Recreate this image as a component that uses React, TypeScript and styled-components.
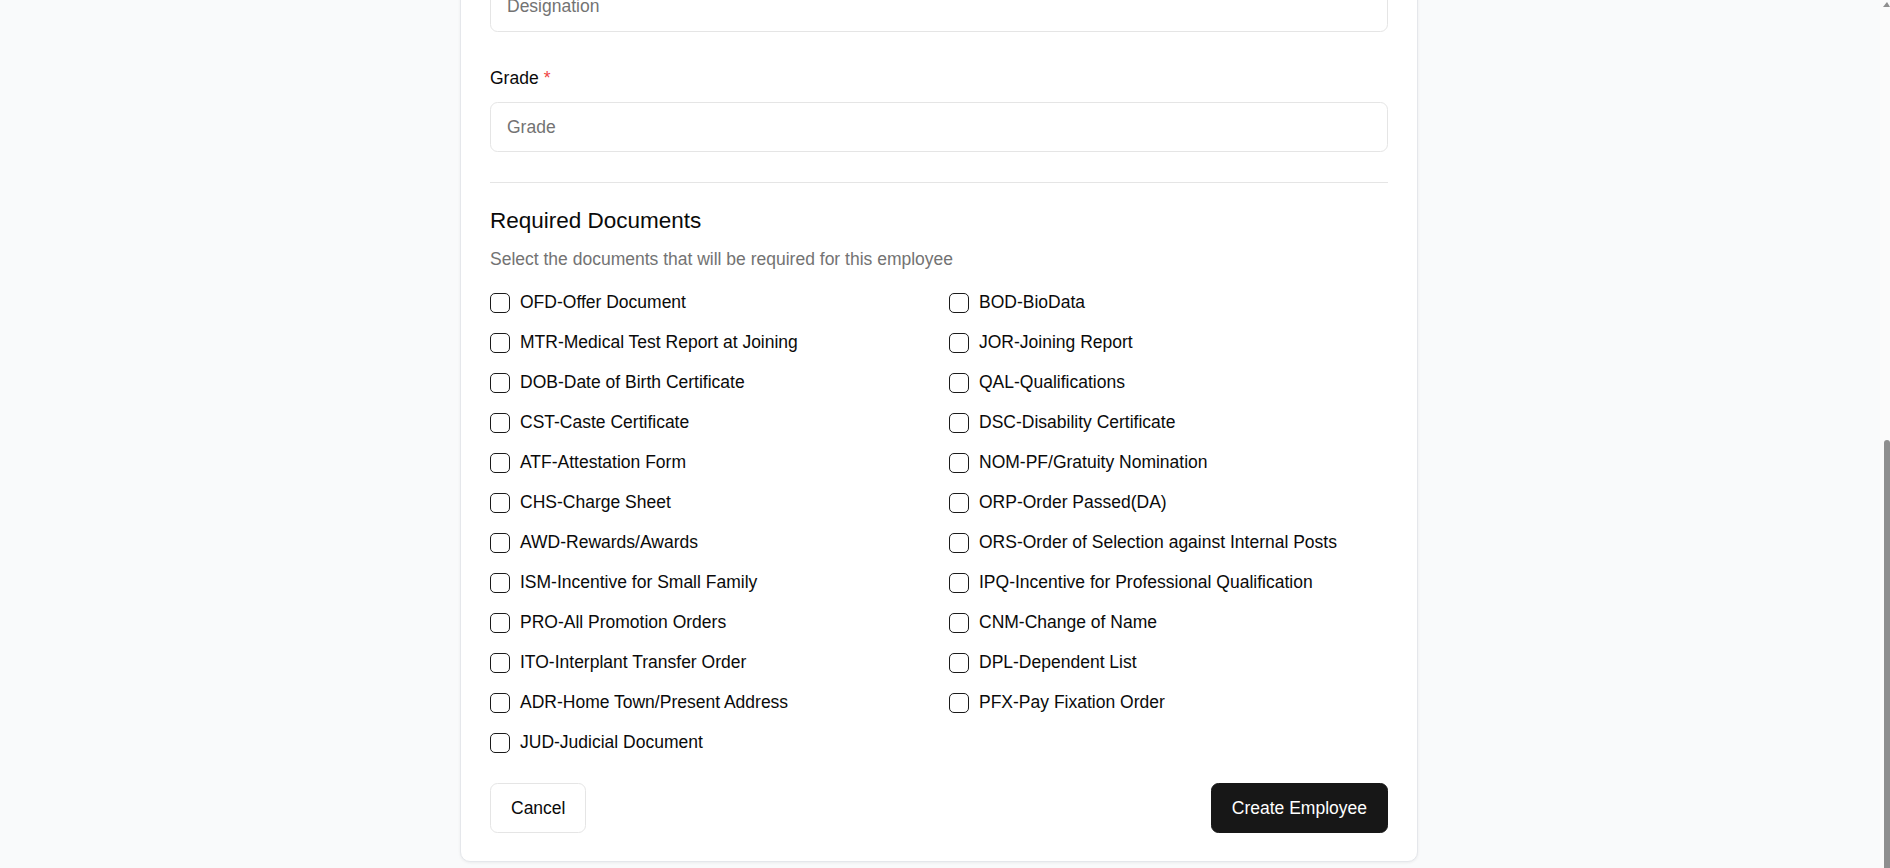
import React, { useLayoutEffect, useRef } from 'react'
import styled, { createGlobalStyle } from 'styled-components'

const GlobalStyle = createGlobalStyle`
  html,
  body {
    height: 100%;
    margin: 0;
    overflow: hidden;
    padding: 0;
  }

  body {
    background: #f9fafb;
    color: #0a0a0a;
    font-family: 'Liberation Sans', Arial, sans-serif;
  }

  * {
    box-sizing: border-box;
  }
`

const Viewport = styled.div`
  background: #f9fafb;
  height: 100vh;
  overflow-y: scroll;
  scrollbar-width: none;

  &::-webkit-scrollbar {
    display: none;
  }
`

// thin scrollbar the browser would draw, kept over the page
const ScrollTrack = styled.div`
  background: #fbfbfb;
  height: 100vh;
  pointer-events: none;
  position: fixed;
  right: 0;
  top: 0;
  width: 10px;
`

const ScrollArrow = styled.div`
  border-bottom: 5px solid #8f8f8f;
  border-left: 4px solid transparent;
  border-right: 3px solid transparent;
  height: 0;
  margin: 2px 0 0 3px;
  width: 0;
`

const ScrollThumb = styled.div`
  background: #8f8f8f;
  border-radius: 3px 3px 0 0;
  bottom: 0;
  position: absolute;
  right: 0;
  top: 440px;
  width: 6px;
`

const Page = styled.main`
  display: flex;
  justify-content: center;
  padding: 55px 12px 6px 0;
`

const Card = styled.form`
  background: #fff;
  border: 1px solid #e5e7eb;
  border-radius: 10px;
  box-shadow: 0 1px 3px rgba(0, 0, 0, 0.06);
  display: flex;
  flex-direction: column;
  padding: 30px 29px 28px;
  width: 958px;
`

const Fields = styled.div`
  display: flex;
  flex-direction: column;
  gap: 34px;
`

const Field = styled.label`
  display: flex;
  flex-direction: column;
  gap: 11.5px;
`

const LabelText = styled.span`
  font-size: 17.5px;
  line-height: 25px;
`

const Required = styled.span`
  color: #ef4444;
  margin-left: 5px;
`

const Input = styled.input`
  background: #fff;
  border: 1px solid #e5e5e5;
  border-radius: 7.5px;
  color: #0a0a0a;
  font-family: inherit;
  font-size: 17.5px;
  height: 50px;
  outline: none;
  padding: 0 16px;
  width: 100%;

  &::placeholder {
    color: #737373;
  }
`

const Divider = styled.hr`
  border: none;
  border-top: 1px solid #e5e5e5;
  margin: 30px 0 0;
`

const SectionTitle = styled.h3`
  font-size: 22.5px;
  font-weight: 400;
  line-height: 35px;
  margin: 20px 0 0;
`

const SectionHint = styled.p`
  color: #737373;
  font-size: 17.5px;
  line-height: 25px;
  margin: 9px 0 0;
`

const DocGrid = styled.div`
  column-gap: 20px;
  display: grid;
  grid-template-columns: 1fr 1fr;
  margin-top: 18px;
  row-gap: 15px;
`

const DocItem = styled.label`
  align-items: center;
  cursor: pointer;
  display: flex;
  font-size: 17.5px;
  gap: 10px;
  height: 25px;
`

const Check = styled.input`
  appearance: none;
  border: 1px solid #1a1a1a;
  border-radius: 5px;
  cursor: pointer;
  flex-shrink: 0;
  height: 20px;
  margin: 1px 0 0;
  width: 20px;

  &:checked {
    background: #171717;
  }
`

const Actions = styled.div`
  align-items: center;
  display: flex;
  justify-content: space-between;
  margin-top: 28px;
`

const Button = styled.button<{ primary?: boolean }>`
  background: ${({ primary }) => (primary ? '#171717' : '#fff')};
  border: 1px solid ${({ primary }) => (primary ? '#171717' : '#e5e5e5')};
  border-radius: 7.5px;
  color: ${({ primary }) => (primary ? '#fff' : '#0a0a0a')};
  cursor: pointer;
  font-family: inherit;
  font-size: 17.5px;
  height: 50px;
  padding: 0 20px;
`

const fields = [
  { name: 'name', label: 'Employee Name', placeholder: 'Employee Name' },
  { name: 'department', label: 'Department', placeholder: 'Department' },
  { name: 'designation', label: 'Designation', placeholder: 'Designation' },
  { name: 'grade', label: 'Grade', placeholder: 'Grade' },
]

const documents = [
  'OFD-Offer Document',
  'BOD-BioData',
  'MTR-Medical Test Report at Joining',
  'JOR-Joining Report',
  'DOB-Date of Birth Certificate',
  'QAL-Qualifications',
  'CST-Caste Certificate',
  'DSC-Disability Certificate',
  'ATF-Attestation Form',
  'NOM-PF/Gratuity Nomination',
  'CHS-Charge Sheet',
  'ORP-Order Passed(DA)',
  'AWD-Rewards/Awards',
  'ORS-Order of Selection against Internal Posts',
  'ISM-Incentive for Small Family',
  'IPQ-Incentive for Professional Qualification',
  'PRO-All Promotion Orders',
  'CNM-Change of Name',
  'ITO-Interplant Transfer Order',
  'DPL-Dependent List',
  'ADR-Home Town/Present Address',
  'PFX-Pay Fixation Order',
  'JUD-Judicial Document',
]

const App: React.FC = () => {
  const viewportRef = useRef<HTMLDivElement>(null)

  useLayoutEffect(() => {
    const el = viewportRef.current
    if (el) el.scrollTop = el.scrollHeight
  }, [])

  return (
    <>
      <GlobalStyle />
      <Viewport ref={viewportRef}>
        <Page>
          <Card onSubmit={(e) => e.preventDefault()}>
            <Fields>
              {fields.map((field) => (
                <Field key={field.name}>
                  <LabelText>
                    {field.label}
                    <Required>*</Required>
                  </LabelText>
                  <Input name={field.name} placeholder={field.placeholder} />
                </Field>
              ))}
            </Fields>

            <Divider />
            <SectionTitle>Required Documents</SectionTitle>
            <SectionHint>Select the documents that will be required for this employee</SectionHint>

            <DocGrid>
              {documents.map((doc) => (
                <DocItem key={doc}>
                  <Check type="checkbox" />
                  {doc}
                </DocItem>
              ))}
            </DocGrid>

            <Actions>
              <Button type="button">Cancel</Button>
              <Button type="submit" primary>
                Create Employee
              </Button>
            </Actions>
          </Card>
        </Page>
      </Viewport>
      <ScrollTrack>
        <ScrollArrow />
        <ScrollThumb />
      </ScrollTrack>
    </>
  )
}

export default App
